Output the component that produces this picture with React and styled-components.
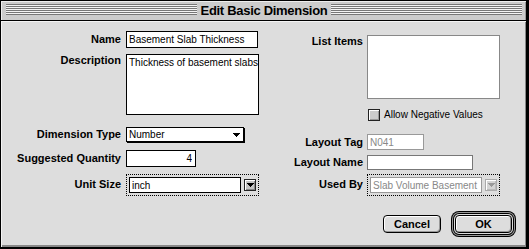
import React from 'react';
import styled, { createGlobalStyle } from 'styled-components';

const GlobalStyle = createGlobalStyle`
  html, body { margin: 0; padding: 0; background: #fff; }
  body { font-family: "Liberation Sans", Arial, sans-serif; }
`;

const sans = '"Liberation Sans", Arial, sans-serif';

const Window = styled.div`
  box-sizing: border-box;
  width: 529px;
  height: 249px;
  display: flex;
  flex-direction: column;
  background: #ddd;
  border: 1px solid #000;
  border-right-width: 3px;
  border-bottom-width: 2px;
`;

const TitleBar = styled.div`
  box-sizing: border-box;
  height: 20px;
  flex: none;
  display: flex;
  align-items: flex-start;
  padding: 3px 4px 0 5px;
  background: #ccc;
  border-bottom: 1px solid #000;
  box-shadow: inset 1px 1px 0 #eee, inset -1px 0 0 #999;
`;

const Stripes = styled.div`
  flex: 1;
  height: 11px;
  background: repeating-linear-gradient(to bottom, #777 0 1px, #f4f4f4 1px 2px);
`;

const Title = styled.div`
  margin-top: -3px;
  padding: 0 4px;
  font: bold 13px/19px ${sans};
  letter-spacing: -0.3px;
  color: #000;
`;

const Body = styled.div`
  flex: 1;
  display: flex;
  flex-direction: column;
  padding: 10px 14px 0 7px;
  box-shadow: inset 1px 1px 0 #f4f4f4, inset -1px -2px 0 #888;
`;

const Columns = styled.div`
  display: grid;
  grid-template-columns: 262px 1fr;
`;

const Column = styled.div`
  display: flex;
  flex-direction: column;
  padding-top: ${p => p.$top || 0}px;
`;

const Field = styled.div`
  display: grid;
  grid-template-columns: ${p => p.$label}px auto;
  column-gap: ${p => p.$gap}px;
  align-items: start;
  margin-top: ${p => p.$top || 0}px;
`;

const Label = styled.label`
  font: bold 11px/${p => p.$lh}px ${sans};
  text-align: right;
  white-space: nowrap;
  color: #000;
`;

const TextBox = styled.input`
  box-sizing: border-box;
  display: block;
  width: ${p => p.$w}px;
  height: ${p => p.$h}px;
  margin: 0;
  padding: 0 3px 0 2px;
  border: 1px solid ${p => (p.$muted ? '#999' : p.$soft ? '#777' : '#000')};
  border-radius: 0;
  background: #fff;
  color: ${p => (p.$muted ? '#888' : '#000')};
  font: 10px ${sans};
  text-align: ${p => p.$align || 'left'};
  outline: none;
`;

const TextArea = styled.textarea`
  box-sizing: border-box;
  display: block;
  width: 133px;
  height: 61px;
  margin: 0;
  padding: 2px 1px 1px 2px;
  border: 1px solid #000;
  border-radius: 0;
  background: #fff;
  font: 10px/12px ${sans};
  color: #000;
  resize: none;
  overflow: hidden;
  outline: none;
`;

const ListBox = styled.div`
  box-sizing: border-box;
  width: 133px;
  height: 64px;
  border: 1px solid #888;
  background: #fff;
`;

const Popup = styled.div`
  box-sizing: border-box;
  width: 118px;
  height: 15px;
  display: flex;
  align-items: center;
  justify-content: space-between;
  padding: 0 3px 0 2px;
  border: 1px solid #000;
  box-shadow: 1px 1px 0 #000;
  background: #fff;
  font: 10px/13px ${sans};
  color: #000;
`;

const Combo = styled.div`
  box-sizing: border-box;
  width: 133px;
  height: 22px;
  display: flex;
  align-items: center;
  gap: 3px;
  padding: 0 2px;
  border: 1px dotted #000;
`;

const ArrowButton = styled.span`
  box-sizing: border-box;
  width: 12px;
  height: 12px;
  display: flex;
  align-items: center;
  justify-content: center;
  border: 1px solid ${p => (p.$disabled ? '#aaa' : '#222')};
  background: ${p => (p.$disabled ? '#d4d4d4' : '#c4c4c4')};
  box-shadow: inset 1px 1px 0 #fff, inset -1px -1px 0 ${p => (p.$disabled ? '#bbb' : '#888')};
`;

const CheckRow = styled.div`
  display: flex;
  align-items: center;
  gap: 4px;
  font: 10px/12px ${sans};
  color: #000;
`;

const Check = styled.span`
  box-sizing: border-box;
  width: 12px;
  height: 12px;
  border: 1px solid #222;
  background: #ccc;
  box-shadow: inset 1px 1px 0 #fff, inset -1px -1px 0 #999;
`;

const Footer = styled.div`
  display: flex;
  justify-content: flex-end;
  align-items: center;
  gap: 14px;
  margin-top: 19px;
`;

const Button = styled.button`
  box-sizing: border-box;
  width: ${p => p.$w}px;
  height: 18px;
  margin: 0;
  padding: 0;
  border: 1px solid #000;
  border-radius: 4px;
  background: #ddd;
  font: bold 11px ${sans};
  color: #000;
  box-shadow: inset 1px 1px 0 #fff, inset -1px -1px 0 #999
    ${p => (p.$default ? ', 0 0 0 1px #ddd, 0 0 0 2px #000, 0 0 0 3px #999, 0 0 0 4px #000' : '')};
`;

const DownArrow = ({ w = 7, h = 4, color = '#000' }) => (
  <svg width={w} height={h} viewBox={`0 0 ${w} ${h}`} shapeRendering="crispEdges">
    <polygon points={`0,0 ${w},0 ${w / 2},${h}`} fill={color} />
  </svg>
);

const Empty = styled.span``;

export default function App() {
  return (
    <>
      <GlobalStyle />
      <Window>
        <TitleBar>
          <Stripes />
          <Title>Edit Basic Dimension</Title>
          <Stripes />
        </TitleBar>
        <Body>
          <Columns>
            <Column>
              <Field $label={113} $gap={5}>
                <Label $lh={17}>Name</Label>
                <TextBox $w={132} $h={17} readOnly value="Basement Slab Thickness" />
              </Field>
              <Field $label={113} $gap={5} $top={6}>
                <Label $lh={13}>Description</Label>
                <TextArea wrap="off" readOnly value="Thickness of basement slabs" />
              </Field>
              <Field $label={113} $gap={5} $top={12}>
                <Label $lh={15}>Dimension Type</Label>
                <Popup>
                  <span>Number</span>
                  <DownArrow w={8} h={4} />
                </Popup>
              </Field>
              <Field $label={113} $gap={5} $top={8}>
                <Label $lh={17}>Suggested Quantity</Label>
                <TextBox $w={70} $h={17} $align="right" readOnly value="4" />
              </Field>
              <Field $label={113} $gap={5} $top={7}>
                <Label $lh={20}>Unit Size</Label>
                <Combo>
                  <TextBox $w={112} $h={16} readOnly value="inch" />
                  <ArrowButton>
                    <DownArrow w={7} h={4} />
                  </ArrowButton>
                </Combo>
              </Field>
            </Column>
            <Column $top={4}>
              <Field $label={93} $gap={4}>
                <Label $lh={13}>List Items</Label>
                <ListBox />
              </Field>
              <Field $label={93} $gap={5} $top={10}>
                <Empty />
                <CheckRow>
                  <Check />
                  <span>Allow Negative Values</span>
                </CheckRow>
              </Field>
              <Field $label={93} $gap={4} $top={13}>
                <Label $lh={16}>Layout Tag</Label>
                <TextBox $w={57} $h={16} $muted readOnly value="N041" />
              </Field>
              <Field $label={93} $gap={4} $top={5}>
                <Label $lh={15}>Layout Name</Label>
                <TextBox $w={106} $h={15} $soft readOnly value="" />
              </Field>
              <Field $label={93} $gap={4} $top={4}>
                <Label $lh={20}>Used By</Label>
                <Combo>
                  <TextBox $w={112} $h={16} $muted readOnly value="Slab Volume Basement" />
                  <ArrowButton $disabled>
                    <DownArrow w={7} h={4} color="#999" />
                  </ArrowButton>
                </Combo>
              </Field>
            </Column>
          </Columns>
          <Footer>
            <Button $w={58}>Cancel</Button>
            <Button $w={57} $default>OK</Button>
          </Footer>
        </Body>
      </Window>
    </>
  );
}
